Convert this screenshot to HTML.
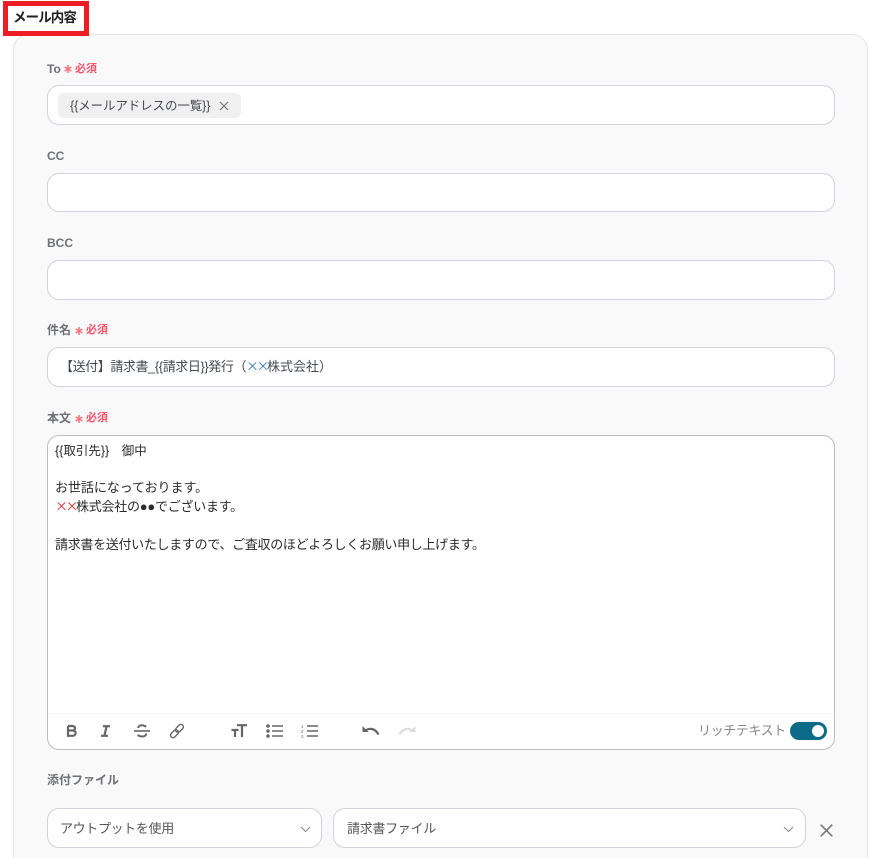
<!DOCTYPE html>
<html lang="ja"><head><meta charset="utf-8">
<style>
*{box-sizing:border-box}
html,body{margin:0;padding:0;background:#fff;width:882px;height:858px;overflow:hidden}
#w{position:relative;width:882px;height:858px;overflow:hidden;font-family:"Liberation Sans","Noto Sans CJK JP",sans-serif;color:#333}
.abs{position:absolute}
.panel{left:13px;top:34px;width:855px;height:860px;background:#f9f9f9;border:1px solid #e3e5ea;border-radius:16px}
.redbox{left:3px;top:1px;width:86px;height:35px;border:5px solid #ee1c25;background:#fff}
.h{left:13px;top:9px;font-size:13.5px;font-weight:700;line-height:18px;color:#222;letter-spacing:-.9px;white-space:nowrap}
.lab{font-size:12px;font-weight:700;color:#6e7178;line-height:16px;white-space:nowrap}
.req{font-size:11px;font-weight:700;color:#f4566c;line-height:16px;white-space:nowrap}
.inp{left:47px;width:788px;height:40px;background:#fff;border:1px solid #cfd3dc;border-radius:12px}
.t{font-size:13px;line-height:18px;color:#444a52;white-space:nowrap}
.chip{left:58px;top:93px;width:183px;height:25px;background:#f0f0f1;border-radius:6px}
.body{left:47px;top:435px;width:788px;height:315px;background:#fff;border:1px solid #bdbdbd;border-radius:12px}
.line{left:55px;font-size:13px;line-height:18px;color:#2b2b2b;white-space:nowrap}
.sep{left:48px;top:713px;width:786px;height:1px;background:#f4f4f4}
.x{font-family:"IPAGothic",sans-serif;font-size:13px;line-height:0;font-weight:400;letter-spacing:-2.5px}
svg{position:absolute;overflow:visible}
</style></head><body><div id="w">
<div class="abs panel"></div>
<div class="abs redbox"></div>
<div class="abs h">メール内容</div>

<div class="abs lab" style="left:47px;top:61px">To</div>
<svg style="left:64px;top:65px" width="8" height="8"><path d="M4 0V8M.6 2L7.4 6M7.4 2L.6 6" stroke="#f9707f" stroke-width="1.5" fill="none"/></svg>
<div class="abs req" style="left:75px;top:61px">必須</div>
<div class="abs inp" style="top:85px"></div>
<div class="abs chip"></div>
<div class="abs t" style="left:70px;top:97px;font-size:12.5px;letter-spacing:-.1px">{{メールアドレスの一覧}}</div>
<svg style="left:219px;top:101px" width="10" height="10"><path d="M1 1L9 9M9 1L1 9" stroke="#777" stroke-width="1.2" fill="none"/></svg>

<div class="abs lab" style="left:47px;top:148px">CC</div>
<div class="abs inp" style="top:173px;height:39px"></div>

<div class="abs lab" style="left:47px;top:235px">BCC</div>
<div class="abs inp" style="top:260px"></div>

<div class="abs lab" style="left:47px;top:322px">件名</div>
<svg style="left:75px;top:327px" width="8" height="8"><path d="M4 0V8M.6 2L7.4 6M7.4 2L.6 6" stroke="#f9707f" stroke-width="1.5" fill="none"/></svg>
<div class="abs req" style="left:86px;top:322px">必須</div>
<div class="abs inp" style="top:347px"></div>
<div class="abs t" style="left:60px;top:358px"><span style="letter-spacing:-.42px">【送付】請求書_{{請求日}}発行（</span><span class="x" style="color:#3f83c4">××</span>株式会社）</div>

<div class="abs lab" style="left:47px;top:410px">本文</div>
<svg style="left:75px;top:415px" width="8" height="8"><path d="M4 0V8M.6 2L7.4 6M7.4 2L.6 6" stroke="#f9707f" stroke-width="1.5" fill="none"/></svg>
<div class="abs req" style="left:86px;top:410px">必須</div>
<div class="abs body"></div>
<div class="abs line" style="top:442px;font-size:12.5px">{{取引先}}　御中</div>
<div class="abs line" style="top:479px;letter-spacing:-.05px">お世話になっております。</div>
<div class="abs line" style="top:498px;letter-spacing:-.25px"><span class="x" style="color:#d9343a">××</span>株式会社の●●でございます。</div>
<div class="abs line" style="top:536px;letter-spacing:-.31px">請求書を送付いたしますので、ご査収のほどよろしくお願い申し上げます。</div>
<div class="abs sep"></div>

<!-- toolbar -->
<svg style="left:66px;top:725px" width="11" height="12"><path d="M2 1H6.2C8 1 9 2 9 3.2C9 4.5 8 5.5 6.5 5.5H2M6.5 5.5C8.5 5.5 9.6 6.6 9.6 8C9.6 9.6 8.4 10.8 6.6 10.8H2V1" fill="none" stroke="#666" stroke-width="2.2"/></svg>
<svg style="left:100px;top:725px" width="11" height="12"><path d="M3 1.2H10M1 10.8H8M6.6 1.2L4.4 10.8" fill="none" stroke="#666" stroke-width="2.2"/></svg>
<svg style="left:134px;top:724px" width="16" height="14"><path d="M0 7H16" stroke="#666" stroke-width="1.6"/><path d="M12 3C11 1.8 9.6 1.3 8 1.3C6 1.3 4.3 2.2 4.3 4M12.2 9.5C12.2 11.5 10.3 12.5 8 12.5C6.3 12.5 4.8 12 3.8 10.8" fill="none" stroke="#666" stroke-width="2"/></svg>
<svg style="left:169px;top:723px" width="16" height="16" viewBox="0 0 16 16"><g fill="none" stroke="#666" stroke-width="1.4"><rect x="8" y="0.8" width="5" height="9" rx="2.5" transform="rotate(45 10.5 5.3)"/><rect x="3" y="6.2" width="5" height="9" rx="2.5" transform="rotate(45 5.5 10.7)"/></g></svg>
<svg style="left:231px;top:724px" width="16" height="14"><path d="M6 1.2H16M11 1.2V13M0.5 6H7.5M4 6V13" fill="none" stroke="#666" stroke-width="2.2"/></svg>
<svg style="left:266px;top:724px" width="17" height="14"><circle cx="2" cy="2" r="1.8" fill="#666"/><circle cx="2" cy="7" r="1.8" fill="#666"/><circle cx="2" cy="12" r="1.8" fill="#666"/><path d="M6 2H17M6 7H17M6 12H17" stroke="#666" stroke-width="1.5"/></svg>
<svg style="left:301px;top:724px" width="17" height="14"><path d="M6 2H17M6 7H17M6 12H17" stroke="#666" stroke-width="1.5"/><text x="0" y="4" font-size="4.5" fill="#666" font-family="Liberation Sans">1</text><text x="0" y="9" font-size="4.5" fill="#666" font-family="Liberation Sans">2</text><text x="0" y="14" font-size="4.5" fill="#666" font-family="Liberation Sans">3</text></svg>
<svg style="left:362px;top:725px" width="18" height="12"><path d="M0.5 1V7H6.5Z" fill="#666"/><path d="M3 6C7 2.5 13 3 16.5 9.5" fill="none" stroke="#666" stroke-width="2.2"/></svg>
<svg style="left:398px;top:725px" width="18" height="12"><path d="M17.5 1V7H11.5Z" fill="#ddd"/><path d="M15 6C11 2.5 5 3 1.5 9.5" fill="none" stroke="#ddd" stroke-width="2.2"/></svg>

<div class="abs t" style="left:698px;top:722px;color:#85888e;letter-spacing:-.4px">リッチテキスト</div>
<div class="abs" style="left:790px;top:722px;width:37px;height:18px;border-radius:9px;background:#0c6b87"></div>
<div class="abs" style="left:812px;top:725px;width:12px;height:12px;border-radius:50%;background:#fff"></div>

<div class="abs lab" style="left:47px;top:772px">添付ファイル</div>

<div class="abs inp" style="top:808px;width:275px"></div>
<div class="abs t" style="left:60px;top:820px;color:#555;letter-spacing:-.35px">アウトプットを使用</div>
<svg style="left:300px;top:826px" width="11" height="7"><path d="M1 1L5.5 5.5L10 1" fill="none" stroke="#8a8d93" stroke-width="1.1"/></svg>
<div class="abs inp" style="left:333px;top:808px;width:473px"></div>
<div class="abs t" style="left:347px;top:820px;color:#555;letter-spacing:-.3px">請求書ファイル</div>
<svg style="left:783px;top:826px" width="11" height="7"><path d="M1 1L5.5 5.5L10 1" fill="none" stroke="#8a8d93" stroke-width="1.1"/></svg>
<svg style="left:820px;top:824px" width="13" height="13"><path d="M0.7 0.7L12.3 12.3M12.3 0.7L0.7 12.3" stroke="#777" stroke-width="1.6" fill="none"/></svg>
</div></body></html>
